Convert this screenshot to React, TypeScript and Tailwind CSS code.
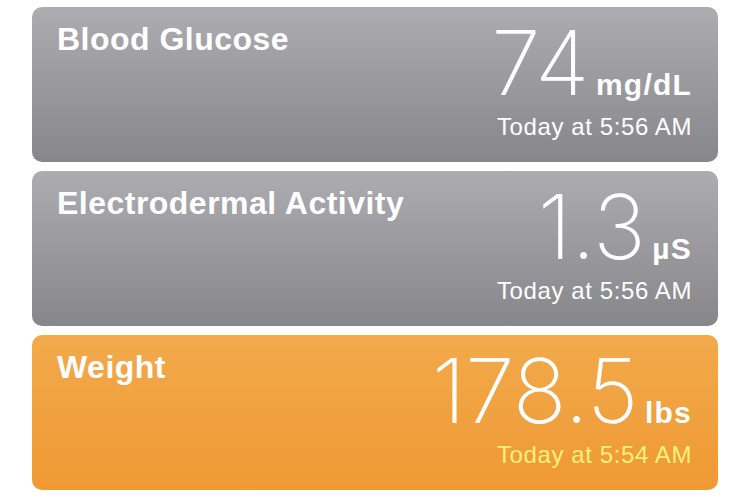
import type { ReactNode } from "react";

type Reading = {
  title: string;
  value: string;
  unit: ReactNode;
  time: string;
  tone: "grey" | "orange";
};

const readings: Reading[] = [
  { title: "Blood Glucose", value: "74", unit: "mg/dL", time: "Today at 5:56 AM", tone: "grey" },
  { title: "Electrodermal Activity", value: "1.3", unit: "µS", time: "Today at 5:56 AM", tone: "grey" },
  { title: "Weight", value: "178.5", unit: "lbs", time: "Today at 5:54 AM", tone: "orange" },
];

function ReadingCard({ title, value, unit, time, tone }: Reading) {
  const orange = tone === "orange";
  return (
    <section
      className={
        "flex h-[155px] justify-between rounded-[10px] pl-[25px] pr-[26px] pt-[16px] " +
        (orange
          ? "bg-gradient-to-b from-[#f2aa4b] to-[#ef9933]"
          : "bg-gradient-to-b from-[#adacb1] to-[#87868b]")
      }
    >
      <h2 className="font-['Liberation_Sans',Arial,sans-serif] text-[32px] font-bold leading-[32px] tracking-[0.015em] text-white">
        {title}
      </h2>
      <div className="flex flex-col items-end">
        <div className="-mt-[5px] flex items-baseline gap-[7px] text-white">
          <span className="font-['Inter','Roboto',sans-serif] text-[89px] font-extralight leading-[89px] tracking-[-0.005em]">
            {value}
          </span>
          <span className="font-['Liberation_Sans',Arial,sans-serif] text-[30px] font-bold leading-[30px] tracking-[0.04em]">
            {unit}
          </span>
        </div>
        <p
          className={
            "mt-[8px] font-['Liberation_Sans',Arial,sans-serif] text-[24px] leading-[24px] tracking-[0.025em] " +
            (orange ? "text-[#fdf17b]" : "text-white")
          }
        >
          {time}
        </p>
      </div>
    </section>
  );
}

export default function App() {
  return (
    <main className="flex min-h-[501px] w-[750px] flex-col gap-[9px] bg-white px-[32px] pt-[7px]">
      {readings.map((r) => (
        <ReadingCard key={r.title} {...r} />
      ))}
    </main>
  );
}
